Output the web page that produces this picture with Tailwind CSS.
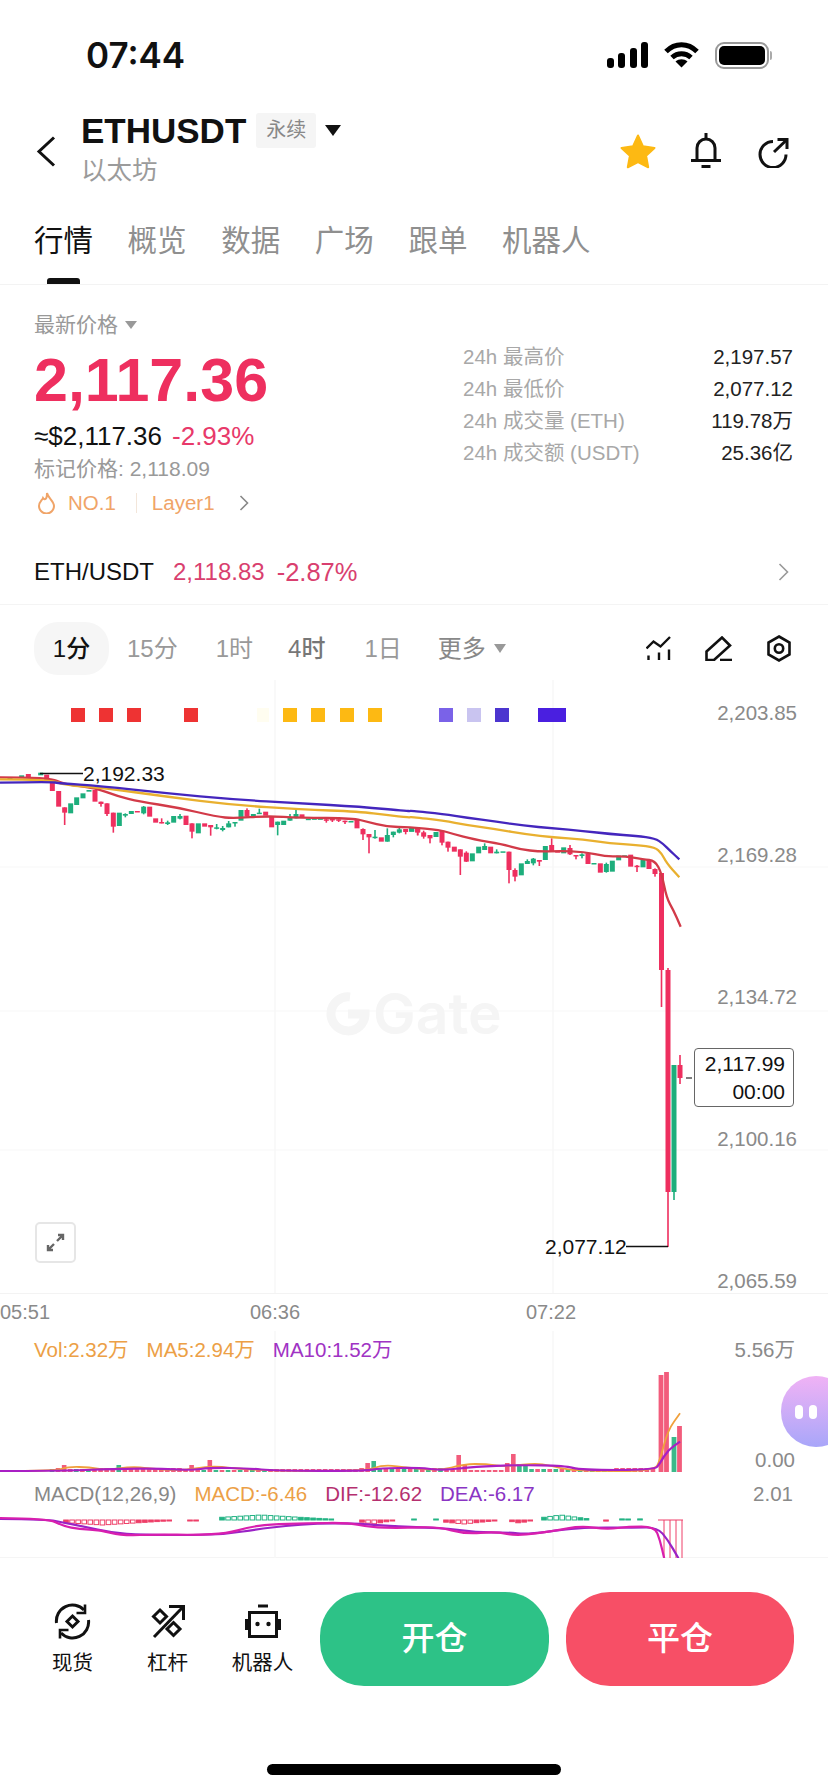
<!DOCTYPE html>
<html lang="en">
<head>
  <meta charset="UTF-8" />
  <meta name="viewport" content="width=device-width, initial-scale=1.0" />
  <title>ETHUSDT</title>
  <script src="https://cdn.jsdelivr.net/npm/@tailwindcss/browser@4"></script>
</head>
<body class="bg-white text-[#111] font-['Liberation_Sans','Noto_Sans_CJK_SC',sans-serif] overflow-hidden">
<div class="w-[828px] h-[1792px] relative overflow-hidden">

  <!-- status bar -->
  <div class="h-[110px] flex items-center pl-[86px]">
    <span class="text-[35px] font-['Inter',sans-serif] font-semibold leading-none">07:44</span>
    <div class="ml-auto flex items-center mr-[56px]">
      <div class="flex items-end gap-[4.5px] h-[26px]">
        <div class="w-[7px] h-[10px] bg-black rounded-[3px]"></div>
        <div class="w-[7px] h-[15px] bg-black rounded-[3px]"></div>
        <div class="w-[7px] h-[20px] bg-black rounded-[3px]"></div>
        <div class="w-[7px] h-[26px] bg-black rounded-[3px]"></div>
      </div>
      <svg class="ml-[16px]" width="35" height="26" viewBox="0 0 35 26" fill="none" stroke="#000" stroke-width="5">
        <path d="M2 9.500C11 .5 24 .5 33 9.500" /><path d="M8 15.500c5.500-5 13.500-5 19 0" /><path d="M17.500 25.500l-6-6c3.500-3 8.500-3 12 0z" fill="#000" stroke="none" />
      </svg>
      <div class="ml-[16px] w-[54px] h-[27px] border-2 border-[#999] rounded-[9px] flex items-center justify-center">
        <div class="w-[46px] h-[19px] bg-black rounded-[5px]"></div>
      </div>
      <div class="w-[2px] h-[9px] bg-[#aaa] ml-[1px] rounded-r"></div>
    </div>
  </div>

  <!-- header -->
  <div class="h-[80px] relative flex pl-[81px]">
    <svg class="absolute left-[36px] top-[26px]" width="20" height="31" viewBox="0 0 20 31" fill="none" stroke="#111" stroke-width="3"><path d="M18 1.500 3 15.500l15 14" /></svg>
    <div>
      <div class="flex items-center h-[40px]">
        <span class="text-[35px] font-bold leading-none">ETHUSDT</span>
        <span class="ml-[10px] w-[60px] h-[35px] bg-[#f5f5f5] text-[#888] text-[20px] rounded-[3px] flex items-center justify-center">永续</span>
        <div class="ml-[9px] w-0 h-0 border-l-[8px] border-r-[8px] border-t-[11px] border-l-transparent border-r-transparent border-t-[#111]"></div>
      </div>
      <div class="text-[25.500px] leading-[30px] text-[#9b9b9b] mt-[5px]">以太坊</div>
    </div>
    <div class="ml-auto flex items-start pt-[23px] mr-[39px]">
      <svg width="38" height="36" viewBox="0 0 38 36"><path d="M19 2.500l5 10.800 11.500 1.600-8.400 7.900 2.100 11.500L19 29l-10.200 5.300 2.100-11.500-8.400-7.900 11.500-1.600z" fill="#fdb913" stroke="#fdb913" stroke-width="2" stroke-linejoin="round" /></svg>
      <svg class="ml-[34px]" width="30" height="35" viewBox="0 0 30 35" fill="none" stroke="#111" stroke-width="3"><path d="M6 27V15a9 9 0 0 1 18 0v12" /><path d="M0 27.500h30" /><path d="M15 0v5" /><path d="M10.500 33.500h9" /></svg>
      <svg class="ml-[37px] mt-[4px]" width="31" height="31" viewBox="0 0 31 31" fill="none" stroke="#111" stroke-width="3"><path d="M15 4.500A13 13 0 1 0 28 17.500" /><path d="M16 15 28 3.500" /><path d="M19.500 2.500h9.500v9.500" /></svg>
    </div>
  </div>

  <!-- tabs -->
  <div class="h-[95px] relative border-b border-[#f3f3f3] flex gap-[34.600px] pl-[34px] pt-[37px] text-[29.500px] leading-[28px] text-[#8f8f8f]">
    <span class="text-[#111]">行情</span>
    <span>概览</span>
    <span>数据</span>
    <span>广场</span>
    <span>跟单</span>
    <span>机器人</span>
    <div class="absolute left-[47px] top-[88px] w-[33px] h-[6px] rounded-t-[3px] bg-[#111]"></div>
  </div>

  <!-- price block -->
  <div class="h-[320px] border-b border-[#f4f4f4] relative">
    <div class="pl-[34px] pt-[28px]">
      <div class="flex items-center h-[24px] text-[21px] text-[#999]">最新价格
        <div class="ml-[7px] w-0 h-0 border-l-[6px] border-r-[6px] border-t-[8px] border-l-transparent border-r-transparent border-t-[#999]"></div>
      </div>
      <div class="mt-[13px] text-[61px] font-bold leading-[60px] text-[#ee2f5f]">2,117.36</div>
      <div class="mt-[11px] h-[30px] flex items-center text-[26px]"><span>≈$2,117.36</span><span class="ml-[10px] text-[#e8396a]">-2.93%</span></div>
      <div class="mt-[6px] h-[24px] flex items-center text-[21px] text-[#999]">标记价格: 2,118.09</div>
      <div class="mt-[10px] h-[24px] flex items-center text-[20.500px] text-[#f0a468]">
        <svg class="ml-[3px]" width="19" height="22" viewBox="0 0 19 22" fill="none" stroke="#f0a468" stroke-width="2"><path d="M10 1c1 5 7 8 7 13a7.500 7.500 0 0 1-15 0c0-4 3-5.500 4-8 1 1.500 2 1.500 3 .5s1-3.500 1-5.500z" /></svg>
        <span class="ml-[12px]">NO.1</span>
        <div class="ml-[20px] w-px h-[20px] bg-[#f3e6da]"></div>
        <span class="ml-[15px]">Layer1</span>
        <svg class="ml-[24px]" width="10" height="16" viewBox="0 0 10 16" fill="none" stroke="#888" stroke-width="1.600"><path d="M1.500 1l7 7-7 7" /></svg>
      </div>
      <div class="mt-[33px] h-[48px] flex items-center text-[24px]">
        <span class="font-medium">ETH/USDT</span>
        <span class="ml-[19px] text-[#d93f6f]">2,118.83</span>
        <span class="ml-[12px] text-[25.500px] text-[#d93f6f]">-2.87%</span>
        <svg class="ml-auto mr-[39px]" width="11" height="18" viewBox="0 0 11 18" fill="none" stroke="#999" stroke-width="1.600"><path d="M1.500 1l8 8-8 8" /></svg>
      </div>
    </div>
    <div class="absolute left-[463px] w-[330px] top-[56px] text-[20.500px]">
      <div class="h-[32px] flex items-center justify-between"><span class="text-[#a8a8a8]">24h 最高价</span><span class="text-[#222]">2,197.57</span></div>
      <div class="h-[32px] flex items-center justify-between"><span class="text-[#a8a8a8]">24h 最低价</span><span class="text-[#222]">2,077.12</span></div>
      <div class="h-[32px] flex items-center justify-between"><span class="text-[#a8a8a8]">24h 成交量 (ETH)</span><span class="text-[#222]">119.78万</span></div>
      <div class="h-[32px] flex items-center justify-between"><span class="text-[#a8a8a8]">24h 成交额 (USDT)</span><span class="text-[#222]">25.36亿</span></div>
    </div>
  </div>

  <!-- interval bar -->
  <div class="h-[75px] pt-[12px] flex items-center text-[24px] text-[#999]">
    <div class="ml-[34px] w-[75px] h-[53px] bg-[#f6f6f6] rounded-[24px] flex items-center justify-center text-[#111] font-medium">1分</div>
    <span class="ml-[18px]">15分</span>
    <span class="ml-[38px]">1时</span>
    <span class="ml-[35px] text-[#777] font-medium">4时</span>
    <span class="ml-[39px]">1日</span>
    <span class="ml-[36px] text-[#888]">更多</span>
    <div class="ml-[8px] w-0 h-0 border-l-[6px] border-r-[6px] border-t-[9px] border-l-transparent border-r-transparent border-t-[#999]"></div>
    <div class="ml-auto mr-[37px] flex items-center">
      <svg width="25" height="25" viewBox="0 0 25 25" fill="none" stroke="#111" stroke-width="2.400"><path d="M.5 12.500 7.500 5.500l7 5L24 1" /><path d="M2.500 19.500v4.500M13 16.500V24M23 13.500V24" /></svg>
      <svg class="ml-[34px]" width="27" height="25" viewBox="0 0 27 25" fill="none" stroke="#111" stroke-width="2.600"><path d="M1.500 15.500 17 1.500l8 8-16 14.500H1.500z" /><path d="M15 24h12" /></svg>
      <svg class="ml-[35px]" width="24" height="27" viewBox="0 0 24 27" fill="none" stroke="#111" stroke-width="2.600"><path d="M12 1.500 22.500 7.500v12L12 25.500 1.500 19.500v-12z" /><circle cx="12" cy="13.500" r="4.200" /></svg>
    </div>
  </div>

  <!-- main kline -->
  <div class="h-[613px] relative">
    <svg id="kline" class="absolute inset-0" width="828" height="613" viewBox="0 680 828 613"></svg>
    <div class="absolute right-[31px] top-[21px] h-[592px] flex flex-col justify-between items-end text-[20.500px] leading-[24px] text-[#8a8a8a]">
      <span>2,203.85</span><span>2,169.28</span><span>2,134.72</span><span>2,100.16</span><span>2,065.59</span>
    </div>
    <div class="absolute left-[83px] top-[82px] text-[21px] leading-[24px] text-[#111]">2,192.33</div>
    <div class="absolute left-[545px] top-[555px] text-[21px] leading-[24px] text-[#111]">2,077.12</div>
    <div class="absolute left-[694px] top-[368px] w-[100px] h-[59px] bg-white border border-[#666] rounded-[4px] flex flex-col items-end justify-center pr-[8px] text-[21px] leading-[28px] text-[#111]">
      <span>2,117.99</span><span>00:00</span>
    </div>
    <div class="absolute left-[326px] top-[305px] flex items-center text-[#f5f5f5]">
      <svg width="44" height="44" viewBox="0 0 44 44" fill="none" stroke="#f5f5f5" stroke-width="9"><path d="M24 5A17 17 0 1 0 39 22H22" /></svg>
      <span class="ml-[3px] text-[57px] font-['Inter',sans-serif] font-semibold leading-none">Gate</span>
    </div>
    <div class="absolute left-[35px] top-[542px] w-[41px] h-[41px] bg-white border-2 border-[#e6e6e6] rounded-[5px] flex items-center justify-center">
      <svg width="19" height="19" viewBox="0 0 19 19" fill="none" stroke="#666" stroke-width="2.400"><path d="M11 8l6-6M12 2h5v5M8 11l-6 6M2 12v5h5" /></svg>
    </div>
  </div>

  <!-- time axis -->
  <div class="h-[38px] relative border-t border-[#f3f3f3] text-[20px] leading-[30px] text-[#8a8a8a]">
    <span class="absolute left-0 top-[3px]">05:51</span>
    <span class="absolute left-[250px] top-[3px]">06:36</span>
    <span class="absolute left-[526px] top-[3px]">07:22</span>
  </div>

  <!-- volume -->
  <div class="h-[147px] relative">
    <svg id="vol" class="absolute inset-0" width="828" height="147" viewBox="0 1331 828 147"></svg>
    <div class="absolute left-[34px] top-[7px] flex gap-[18px] text-[20.500px] leading-[24px]">
      <span class="text-[#eca046]">Vol:2.32万</span>
      <span class="text-[#eca046]">MA5:2.94万</span>
      <span class="text-[#a033c4]">MA10:1.52万</span>
    </div>
    <span class="absolute right-[33px] top-[7px] text-[20.500px] leading-[24px] text-[#8a8a8a]">5.56万</span>
    <span class="absolute right-[33px] top-[117px] text-[20.500px] leading-[24px] text-[#8a8a8a]">0.00</span>
  </div>

  <!-- macd -->
  <div class="h-[80px] relative border-b border-[#f5f5f5]">
    <svg id="macd" class="absolute inset-0" width="828" height="80" viewBox="0 1478 828 80"></svg>
    <div class="absolute left-[34px] top-[4px] flex gap-[18px] text-[20.500px] leading-[24px]">
      <span class="text-[#888]">MACD(12,26,9)</span>
      <span class="text-[#eca046]">MACD:-6.46</span>
      <span class="text-[#b5306f]">DIF:-12.62</span>
      <span class="text-[#8a35c4]">DEA:-6.17</span>
    </div>
    <span class="absolute right-[35px] top-[4px] text-[20.500px] leading-[24px] text-[#8a8a8a]">2.01</span>
  </div>

  <!-- floating bubble -->
  <div class="absolute left-[781px] top-[1376px] w-[70px] h-[71px] rounded-[35px] bg-gradient-to-b from-[#f0b2f5] to-[#a8a6f9] flex items-center pl-[14px] gap-[6px]">
    <div class="w-[8px] h-[14px] bg-white rounded-full"></div>
    <div class="w-[8px] h-[14px] bg-white rounded-full"></div>
  </div>

  <!-- bottom actions -->
  <div class="h-[170px] pt-[34px] flex items-start">
    <div class="w-[320px] flex pl-[25px] pt-[11px] text-[20.500px] leading-[24px]">
      <div class="w-[95px] flex flex-col items-center">
        <svg width="37" height="37" viewBox="0 0 37 37" fill="none" stroke="#111" stroke-width="3"><path d="M2.500 20A16 16 0 0 1 30 7" /><path d="M34.500 17A16 16 0 0 1 7 30" /><path d="M31 1.500V10h-8.500" stroke-width="2.600" /><path d="M6 35.500V27h8.500" stroke-width="2.600" /><path d="M18.500 13l5.500 5.500-5.500 5.500-5.500-5.500z" /></svg>
        <span class="mt-[11px]">现货</span>
      </div>
      <div class="w-[95px] flex flex-col items-center">
        <svg width="34" height="37" viewBox="0 0 34 37" fill="none" stroke="#111" stroke-width="3"><path d="M9 7l6.500 6.500L9 20 2.500 13.500z" /><path d="M22.500 19.500 29 26l-6.500 6.500L16 26z" /><path d="M3 34 31 5" /><path d="M18 3.500h14.500V17" /></svg>
        <span class="mt-[11px]">杠杆</span>
      </div>
      <div class="w-[95px] flex flex-col items-center">
        <svg width="36" height="37" viewBox="0 0 36 37" fill="#111"><path d="M13 3h10" stroke="#111" stroke-width="3" /><rect x="4.500" y="9.500" width="27" height="24" fill="none" stroke="#111" stroke-width="3" /><rect x="0" y="16" width="3" height="11" /><rect x="33" y="16" width="3" height="11" /><circle cx="12.500" cy="21" r="2.200" /><circle cx="23.500" cy="21" r="2.200" /></svg>
        <span class="mt-[11px]">机器人</span>
      </div>
    </div>
    <button class="w-[229px] h-[94px] bg-[#2dc287] text-white text-[33px] font-medium rounded-[44px]">开仓</button>
    <button class="ml-[17px] w-[228px] h-[94px] bg-[#f74f66] text-white text-[33px] font-medium rounded-[44px]">平仓</button>
  </div>

  <!-- home bar -->
  <div class="absolute left-[267px] top-[1764px] w-[294px] h-[11px] bg-black rounded-full"></div>
</div>

<script>
  const RED = "#ee2f5f", GREEN = "#1dae7c";

  // [x, top, bottom, colour, wickTop, wickBottom] read off the chart
  const left = [
    [30,262,268,"g"],[65,256,262,"g"],[85,252,262,"r"],[122,248,256,"g"],[140,254,270,"r"],
    [157,268,303,"r"],[176,303,350,"r"],[194,352,368,"r",352,405],[212,340,370,"g"],[230,322,345,"g"],
    [249,310,325,"g"],[267,300,305,"g"],[285,300,335,"r"],[303,335,342,"r",335,350],[321,340,372,"r",340,378],
    [340,368,410,"r",368,428],[358,368,408,"g"],[376,372,377,"g",370,382],[394,363,372,"g"],[412,363,367,"r"],
    [431,350,370,"g",348,373],[449,350,380,"r"],[467,385,398,"r"],[485,396,399,"r",385,400],[503,397,402,"g",392,405],
    [521,378,398,"g"],[540,378,386,"g",372,388],[558,377,405,"r"],[576,400,425,"r",400,445],[595,400,430,"g"],
    [614,400,410,"r"],[632,405,412,"r",405,437],[650,412,416,"g",402,418],[668,414,420,"g",408,424],[686,400,412,"g",393,412],
    [705,396,400,"g",396,410],[723,360,392,"g"],[741,360,380,"r",355,380],[760,372,382,"g"],[778,368,372,"g",356,372],
    [797,365,377,"r"],[815,378,412,"r"],[833,395,405,"g",395,436],[851,392,405,"g"],[870,382,392,"g",372,392],
    [888,372,385,"g",358,385],[906,373,384,"r"],[925,386,388,"g"],[943,385,389,"g"],[961,385,388,"g"],
    [979,388,390,"r",386,398],[997,387,390,"r",387,396],[1016,388,391,"r",388,396],[1035,392,394,"r",392,402],[1053,393,395,"g"],
    [1071,390,415,"r"],[1089,417,433,"r",415,450],[1107,432,442,"r",432,490],[1125,440,444,"g",420,446],[1144,442,455,"r"],
    [1162,435,455,"g",415,455],[1180,425,435,"g",425,442],[1198,418,428,"g",412,430],[1217,417,426,"r",417,433],[1235,414,425,"g"],[1253,413,426,"r",413,436]
  ];
  const right = [
    [5,415,425,"g"],[23,415,428,"r",415,436],[41,427,440,"r",422,446],[60,435,445,"r",435,460],[78,426,441,"g"],
    [96,422,458,"r",422,466],[114,455,473,"r",455,485],[133,470,485,"r"],[151,478,500,"r",478,555],[169,488,515,"r",484,516],
    [187,490,514,"g"],[206,470,490,"g"],[224,468,480,"g",460,480],[242,470,490,"r"],[260,485,490,"g",478,490],
    [279,484,488,"g"],[297,485,540,"r",485,580],[315,540,560,"r",535,574],[334,520,556,"g"],[352,513,522,"g",508,522],
    [370,506,520,"g",504,526],[388,510,515,"r",510,528],[406,468,510,"g"],[425,465,485,"r",445,485],[443,482,488,"r"],
    [461,472,490,"g"],[480,474,493,"r",465,495],[498,495,499,"r",495,508],[516,493,498,"g",490,505],[534,490,522,"r"],
    [552,519,523,"g"],[571,520,548,"r"],[589,522,546,"g",518,548],[607,512,545,"g"],[626,497,511,"g"],
    [644,496,499,"g"],[662,494,530,"r"],[681,527,530,"r",525,546],[699,510,532,"g"],[717,510,537,"r"],[735,537,552,"r",535,560]
  ];

  function smooth(pts) {
    let d = `M${pts[0][0]} ${pts[0][1]}`;
    for (let i = 1; i < pts.length - 1; i++) {
      const mx = (pts[i][0] + pts[i + 1][0]) / 2, my = (pts[i][1] + pts[i + 1][1]) / 2;
      d += ` Q${pts[i][0]} ${pts[i][1]} ${mx} ${my}`;
    }
    const last = pts[pts.length - 1];
    return d + ` L${last[0]} ${last[1]}`;
  }

  function candle(x, top, bot, col, wt, wb) {
    const c = col === "g" ? GREEN : RED;
    let s = `<rect x="${x - 2.5}" y="${top}" width="5" height="${Math.max(bot - top, 1.5)}" fill="${c}"/>`;
    if (wt !== undefined) s += `<rect x="${x - 0.8}" y="${wt}" width="1.6" height="${wb - wt}" fill="${c}"/>`;
    return s;
  }

  function gridV(y1, y2) {
    return [275, 553].map(x => `<line x1="${x}" x2="${x}" y1="${y1}" y2="${y2}" stroke="#f7f7f7" stroke-width="1.500"/>`).join("");
  }

  // main chart
  let k = gridV(680, 1293);
  [867, 1011, 1150].forEach(y => { k += `<line x1="0" x2="828" y1="${y}" y2="${y}" stroke="#f7f7f7" stroke-width="1"/>`; });

  left.forEach(c => { k += candle(c[0] / 3, 690 + c[1] / 3, 690 + c[2] / 3, c[3], c[4] && 690 + c[4] / 3, c[5] && 690 + c[5] / 3); });
  right.forEach(c => { k += candle(410 + c[0] / 3, 690 + c[1] / 3, 690 + c[2] / 3, c[3], c[4] && 690 + c[4] / 3, c[5] && 690 + c[5] / 3); });
  k += candle(661.500, 873, 970, "r", 873, 1007);
  k += candle(668, 970, 1192, "r", 968, 1247);
  k += candle(674, 1065, 1192, "g", 1065, 1200);
  k += candle(680, 1065, 1078, "r", 1055, 1084);

  const line = (a, b) => a.map(p => [p[0] / 3, 690 + p[1] / 3]).concat(b.map(p => [410 + p[0] / 3, 690 + p[1] / 3]));
  const maRed = line(
    [[0,262],[150,262],[190,282],[290,295],[350,318],[420,335],[530,352],[650,380],[700,385],[800,378],[900,383],[1060,385],[1100,395],[1160,410],[1230,412]],
    [[0,412],[90,420],[130,432],[190,448],[280,463],[330,478],[390,485],[450,483],[520,485],[590,500],[640,498],[700,508],[735,512],[755,550],[770,625],[790,660],[812,710]]
  );
  const maYellow = line(
    [[0,268],[150,268],[190,285],[320,295],[500,320],[700,345],[900,358],[1080,365],[1160,375],[1230,383]],
    [[0,380],[100,392],[170,405],[260,418],[350,433],[430,442],[520,448],[600,460],[680,465],[735,472],[755,490],[770,520],[808,562]]
  );
  const maBlue = line(
    [[0,278],[150,275],[180,280],[300,288],[500,310],[700,328],[900,340],[1080,350],[1230,364]],
    [[0,362],[100,372],[170,383],[260,395],[340,407],[430,415],[520,423],[600,432],[680,438],[735,445],[760,462],[780,482],[808,508]]
  );
  k += `<path d="${smooth(maRed)}" fill="none" stroke="#d23a48" stroke-width="2.300"/>`;
  k += `<path d="${smooth(maYellow)}" fill="none" stroke="#e9b02f" stroke-width="2.300"/>`;
  k += `<path d="${smooth(maBlue)}" fill="none" stroke="#4426bd" stroke-width="2.300"/>`;

  k += `<line x1="40" x2="83" y1="773.500" y2="773.500" stroke="#111" stroke-width="1.500"/>`;
  k += `<line x1="626" x2="668" y1="1246.500" y2="1246.500" stroke="#111" stroke-width="1.500"/>`;
  k += `<line x1="686" x2="692" y1="1078" y2="1078" stroke="#555" stroke-width="1.500"/>`;

  const squares = [
    [71,14,"#ee3333"],[99,14,"#ee3333"],[127,14,"#ee3333"],[184,14,"#ee3333"],[257,12,"#fffdf0"],
    [283,14,"#fdb913"],[311,14,"#fdb913"],[340,14,"#fdb913"],[368,14,"#fdb913"],
    [439,14,"#7a62e8"],[467,14,"#c9c4f0"],[495,14,"#4c35cf"],[538,28,"#4a1fe0"]
  ];
  squares.forEach(s => { k += `<rect x="${s[0]}" y="708" width="${s[1]}" height="14" fill="${s[2]}"/>`; });
  document.getElementById("kline").innerHTML = k;

  // volume
  let v = gridV(1331, 1478);
  const base = 1472;
  const tall = { 58: 4, 64: 7, 119: 7, 193: 7, 211: 12, 369: 9, 376: 11, 460: 17, 466: 7, 508: 9, 514: 18, 520: 8, 526: 6 };
  for (let x = 52; x < 656; x += 6.07) {
    const key = Object.keys(tall).find(t => Math.abs(t - x) <= 3);
    const h = key ? tall[key] : 2 + (Math.round(x) % 3);
    const isGreen = key ? [119, 376, 520, 526].includes(+key) : Math.round(x) % 4 === 0;
    v += `<rect x="${x - 2.3}" y="${base - h}" width="4.600" height="${h}" fill="${isGreen ? "#3cb98a" : "#f25c7c"}"/>`;
  }
  [[661, 1375, "#f25c7c"], [666.500, 1372, "#f25c7c"], [674, 1437, "#3cb98a"], [679.500, 1426, "#f25c7c"]].forEach(b => {
    v += `<rect x="${b[0] - 2.400}" y="${b[1]}" width="4.800" height="${base - b[1]}" fill="${b[2]}"/>`;
  });
  const volPts = a => a.map(p => [p[0] / 1.894, 1290 + p[1] / 3]);
  const volOrange = volPts([[0,543],[105,543],[130,530],[170,532],[200,540],[250,530],[280,535],[340,543],[400,527],[440,535],[520,543],[690,543],[725,525],[760,530],[830,543],[880,522],[920,522],[960,530],[1020,518],[1060,535],[1100,543],[1240,543],[1250,510],[1265,420],[1288,370]]);
  const volPurple = volPts([[0,543],[105,543],[220,537],[300,535],[360,541],[400,533],[470,535],[520,542],[690,543],[720,535],[790,533],[840,541],[900,530],[980,525],[1070,527],[1100,540],[1240,540],[1250,520],[1265,480],[1288,455]]);
  v += `<path d="${smooth(volOrange)}" fill="none" stroke="#f0a03c" stroke-width="1.800"/>`;
  v += `<path d="${smooth(volPurple)}" fill="none" stroke="#a91fc4" stroke-width="2.200"/>`;
  document.getElementById("vol").innerHTML = v;

  // macd
  let m = gridV(1478, 1558);
  const zero = 1520;
  const segs = [[66,170,"r",5],[190,200,"r",1],[222,333,"g",-5],[362,393,"r",4],[414,420,"g",-1],[436,440,"g",-1],[446,496,"r",4],[512,533,"r",3],[544,591,"g",-5],[606,612,"r",2],[622,630,"g",-2],[640,646,"g",-2]];
  segs.forEach(([a, b, col, peak]) => {
    for (let x = a; x <= b; x += 6.07) {
      const t = (x - a) / Math.max(b - a, 1);
      const h = Math.max(1, Math.abs(peak) * (1 - Math.abs(t - 0.35) * 1.300));
      const y = peak < 0 ? zero - h : zero;
      const c = col === "g" ? "#24b384" : "#ee3f68";
      m += `<rect x="${x - 2.300}" y="${y}" width="4.600" height="${h}" fill="${h > 3 ? "#fff" : c}" stroke="${c}" stroke-width="1"/>`;
    }
  });
  [664, 670, 676, 682].forEach(x => { m += `<line x1="${x}" x2="${x}" y1="${zero}" y2="1558" stroke="#ee3f68" stroke-width="1"/>`; });
  m += `<line x1="658" x2="683" y1="${zero}" y2="${zero}" stroke="#ee3f68" stroke-width="1"/>`;
  const macdPts = a => a.map(p => [p[0] / 1.894, 1290 + p[1] / 3]);
  const dif = macdPts([[0,684],[90,685],[120,708],[150,718],[190,720],[230,737],[300,733],[370,735],[430,730],[470,712],[510,703],[580,700],[660,698],[700,712],[760,714],[830,710],[880,732],[940,725],[980,738],[1050,722],[1100,708],[1150,718],[1190,710],[1240,710],[1250,750],[1258,805]]);
  const dea = macdPts([[0,687],[90,688],[120,698],[160,710],[210,728],[270,735],[370,735],[430,732],[490,717],[540,708],[600,700],[670,700],[720,706],[790,712],[850,715],[900,727],[960,727],[1000,733],[1070,718],[1120,712],[1200,713],[1245,712],[1265,750],[1285,805]]);
  m += `<path d="${smooth(dea)}" fill="none" stroke="#9a22c6" stroke-width="2.200"/>`;
  m += `<path d="${smooth(dif)}" fill="none" stroke="#d81fae" stroke-width="2.200"/>`;
  document.getElementById("macd").innerHTML = m;
</script>
</body>
</html>
